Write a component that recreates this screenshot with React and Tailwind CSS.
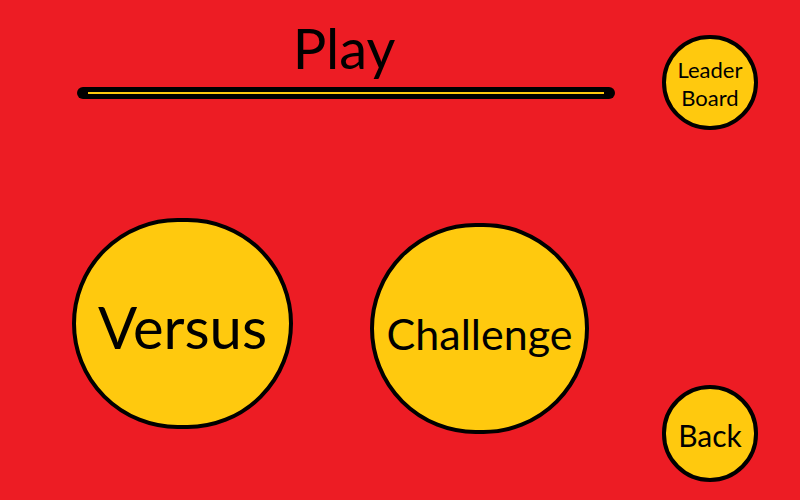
import React from "react";

const font = { fontFamily: '"Lato", "Open Sans", sans-serif' };

const Bubble = ({ className, children }) => (
    <button
        type="button"
        className={"flex flex-col items-center justify-center rounded-full border-4 border-black bg-[#ffc90e] text-black leading-none " + className}
    >
        {children}
    </button>
);

const App = () => {
    return (
        <div className="w-[800px] h-[500px] bg-[#ed1c24] flex overflow-hidden" style={font}>
            {/* left side: title + main modes */}
            <div className="flex flex-col w-[640px]">
                <div className="flex flex-col items-start pl-[77px] pt-[18px]">
                    <div className="w-[538px] flex justify-center">
                        <h1 className="text-[56px] leading-[60px] text-black -ml-[4px]">Play</h1>
                    </div>
                    <div className="mt-[9px] w-[538px] h-[12px] rounded-full bg-black flex items-center px-[11px]">
                        <div className="h-[2px] w-full bg-[#ffc90e]" />
                    </div>
                </div>

                <div className="flex items-start pl-[72px] mt-[119px] gap-[77px]">
                    <Bubble className="w-[221px] h-[211px] text-[58px] pt-[6px]">Versus</Bubble>
                    <Bubble className="w-[219px] h-[211px] mt-[5px] text-[43px] pt-[10px]">Challenge</Bubble>
                </div>
            </div>

            {/* right side: small buttons */}
            <div className="flex flex-col justify-between pl-[22px] pt-[35px] pb-[18px]">
                <Bubble className="w-[96px] h-[95px] text-[22px] leading-[28px] pt-[2px]">
                    <span className="leading-[28px]">Leader</span>
                    <span className="leading-[28px]">Board</span>
                </Bubble>
                <Bubble className="w-[96px] h-[97px] text-[30px] pt-[3px]">Back</Bubble>
            </div>
        </div>
    );
};

export default App;
